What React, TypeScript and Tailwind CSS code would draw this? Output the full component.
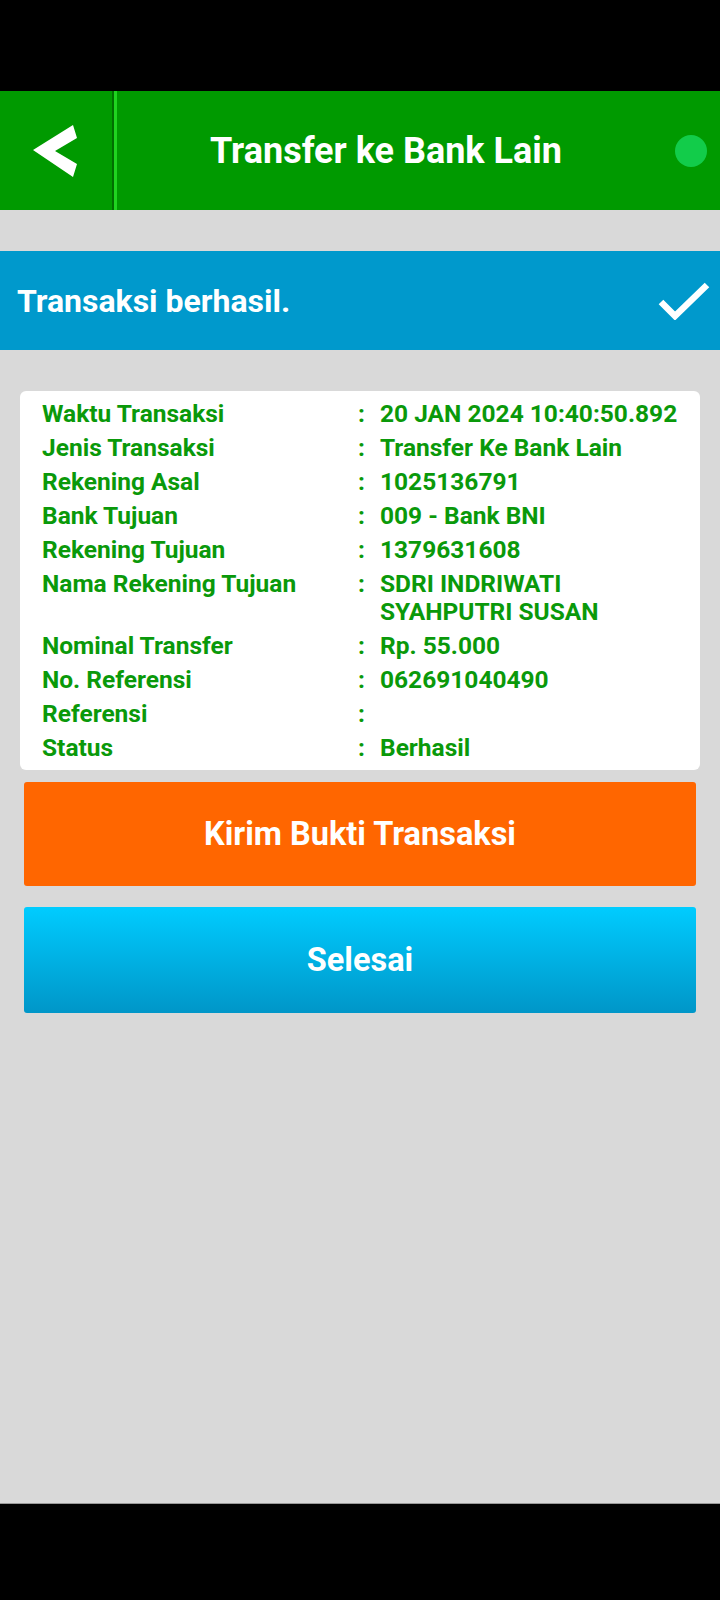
const rows: [string, string[]][] = [
  ['Waktu Transaksi', ['20 JAN 2024 10:40:50.892']],
  ['Jenis Transaksi', ['Transfer Ke Bank Lain']],
  ['Rekening Asal', ['1025136791']],
  ['Bank Tujuan', ['009 - Bank BNI']],
  ['Rekening Tujuan', ['1379631608']],
  ['Nama Rekening Tujuan', ['SDRI INDRIWATI', 'SYAHPUTRI SUSAN']],
  ['Nominal Transfer', ['Rp. 55.000']],
  ['No. Referensi', ['062691040490']],
  ['Referensi', ['']],
  ['Status', ['Berhasil']],
];

export default function App() {
  return (
    <div
      className="flex h-[1600px] w-[720px] flex-col bg-[#d9d9d9]"
      style={{ fontFamily: 'Roboto, "Noto Sans", sans-serif' }}
    >
      {/* status bar */}
      <div className="h-[91px] bg-black" />

      {/* header */}
      <div className="flex h-[119px] items-stretch bg-[#009a00]">
        <div className="flex w-[112px] items-center pl-[33px]">
          <svg width="46" height="52" viewBox="0 0 46 52">
            <polygon points="0,25 40,0 44,13 22,26 44,39 40,52" fill="#fff" />
          </svg>
        </div>
        <div className="w-[2px] bg-[#006e00]" />
        <div className="w-[3px] bg-[#1fd31f]" />
        <div className="flex flex-1 items-center justify-center pr-[20px] text-[36px] font-bold text-white">
          Transfer ke Bank Lain
        </div>
        <div className="flex items-center pr-[13px]">
          <div className="h-[32px] w-[32px] rounded-full bg-[#12cc4a]" />
        </div>
      </div>

      {/* success bar */}
      <div className="mt-[41px] flex h-[99px] items-center justify-between bg-[#0099cc] pl-[17px] pr-[10px]">
        <span className="text-[32px] font-bold text-white">Transaksi berhasil.</span>
        <svg width="52" height="38" viewBox="0 0 52 38">
          <polyline points="3,20 17,34 49,3" fill="none" stroke="#fff" strokeWidth="6.5" />
        </svg>
      </div>

      {/* detail card */}
      <div className="mx-[20px] mt-[41px] flex h-[379px] flex-col gap-[6px] rounded-[6px] bg-white pl-[22px] pt-[9px] text-[24.5px] font-bold leading-[28px] text-[#0a990a]">
        {rows.map(([label, value]) => (
          <div key={label} className="flex">
            <div className="w-[316px]">{label}</div>
            <div className="w-[22px]">:</div>
            <div>
              {value.map((v, i) => (
                <div key={i} className="min-h-[28px]">
                  {v}
                </div>
              ))}
            </div>
          </div>
        ))}
      </div>

      {/* buttons */}
      <div className="mx-[24px] mt-[12px] flex h-[104px] items-center justify-center rounded-[3px] bg-[#ff6600] text-[32.5px] font-bold text-white">
        Kirim Bukti Transaksi
      </div>
      <div className="mx-[24px] mt-[21px] flex h-[106px] items-center justify-center rounded-[3px] bg-gradient-to-b from-[#00ccff] to-[#0096c8] text-[32.5px] font-bold text-white">
        Selesai
      </div>

      <div className="flex-1" />
      <div className="h-px bg-[#9a9a9a]" />
      <div className="h-[96px] bg-black" />
    </div>
  );
}
